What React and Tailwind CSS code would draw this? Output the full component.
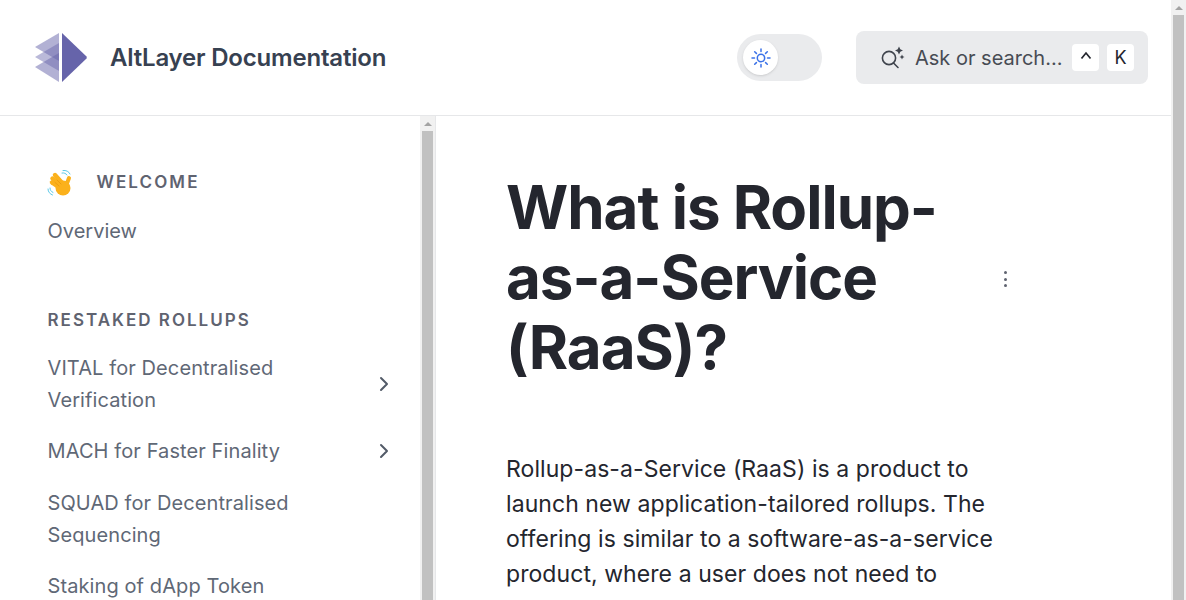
import { ChevronRight } from 'lucide-react'

const NAV = [
  { label: ['VITAL for Decentralised', 'Verification'], chevron: true },
  { label: ['MACH for Faster Finality'], chevron: true },
  { label: ['SQUAD for Decentralised', 'Sequencing'] },
  { label: ['Staking of dApp Token'] },
]

function Logo() {
  return (
    <svg width="54" height="52" viewBox="0 0 54 52" className="shrink-0">
      <path d="M25 1 L1 15 L25 29 Z" fill="#6664aa" fillOpacity="0.5" />
      <path d="M25 11 L1 25 L25 39 Z" fill="#6664aa" fillOpacity="0.45" />
      <path d="M25 21 L1 35 L25 50 Z" fill="#6664aa" fillOpacity="0.5" />
      <path d="M28 1 L52.5 24.5 Q53 25.5 52.5 26.5 L28 50 Z" fill="#6664aa" />
    </svg>
  )
}

function SunIcon() {
  return (
    <svg width="20" height="20" viewBox="0 0 20 20" fill="none" stroke="#3b72e8" strokeWidth="1.5" strokeLinecap="round">
      <circle cx="10" cy="10" r="3.7" />
      <path d="M10 1v2.5M10 16.5V19M1 10h2.5M16.5 10H19M3.7 3.7l1.7 1.7M14.6 14.6l1.7 1.7M3.7 16.3l1.7-1.7M14.6 5.4l1.7-1.7" />
    </svg>
  )
}

function AskIcon() {
  return (
    <svg width="24" height="24" viewBox="0 0 24 24" fill="none" className="shrink-0">
      <circle cx="8" cy="12" r="6.6" stroke="#3f444d" strokeWidth="1.6" />
      <path d="M12.5 17l4.5 4.5" stroke="#3f444d" strokeWidth="1.6" strokeLinecap="round" />
      <path d="M18 0.5l1.3 2.7 2.7 1.3-2.7 1.3L18 8.5l-1.3-2.7L14 4.5l2.7-1.3z" fill="#3f444d" />
      <path d="M21 8.5l.8 1.7 1.7.8-1.7.8-.8 1.7-.8-1.7-1.7-.8 1.7-.8z" fill="#3f444d" />
    </svg>
  )
}

function CaretIcon() {
  return (
    <svg width="12" height="10" viewBox="0 0 12 10" fill="none" stroke="#24262e" strokeWidth="1.7" className="-mt-[4px]">
      <path d="M1.5 7.5 L6 2 L10.5 7.5" />
    </svg>
  )
}

function WaveEmoji() {
  return (
    <svg width="28" height="28" viewBox="0 0 28 28" fill="none" className="shrink-0 -ml-[1px]">
      <g stroke="#fbb11c" strokeWidth="4.4" strokeLinecap="round">
        <path d="M16 15 L8 6" />
        <path d="M14 17 L5.5 9.5" />
        <path d="M13 19 L5 13.5" />
        <path d="M19 17 L22 9" strokeWidth="4" />
      </g>
      <circle cx="16" cy="19" r="7.5" fill="#fbb11c" />
      <path d="M10 11l4 4M8 13.5l4 3.5" stroke="#e8930c" strokeWidth="0.7" strokeLinecap="round" />
      <path d="M15 4c2-.5 4 .5 5 2M16 1.5c3-.5 6 1 7 3.5M3 19c0 2 1 3.5 3 4.5M1 20c0 3 2 5 4.5 6" stroke="#5cc9e8" strokeWidth="1" strokeLinecap="round" />
    </svg>
  )
}

function ScrollTrack() {
  return (
    <div className="w-[15px] shrink-0 flex flex-col bg-[#f1f1f1]">
      <div className="h-[15px] flex items-center justify-center">
        <span className="w-0 h-0 border-x-[4px] border-x-transparent border-b-[4px] border-b-[#a3a3a3]" />
      </div>
      <div className="flex-1 mx-[2px] bg-[#c1c1c1]" />
    </div>
  )
}

function Kbd({ children }) {
  return (
    <span className="w-[27px] h-[27px] bg-white rounded flex items-center justify-center text-[18px] text-[#24262e]">
      {children}
    </span>
  )
}

export default function App() {
  return (
    <div className="h-[600px] w-[1186px] flex overflow-hidden bg-white text-[#24262e] font-['Inter','Liberation_Sans',sans-serif]">
      <div className="w-[1171px] flex flex-col">
        {/* Header */}
        <header className="h-[116px] shrink-0 border-b border-[#e6e7e9] flex items-center pl-[34px] pr-[23px]">
          <Logo />
          <span className="ml-[22px] text-[24px] font-semibold tracking-[-0.2px] text-[#374151]">AltLayer Documentation</span>
          <div className="ml-auto w-[85px] h-[47px] rounded-full bg-[#eaebed] flex items-center pl-[6px]">
            <span className="w-[35px] h-[35px] rounded-full bg-white shadow flex items-center justify-center">
              <SunIcon />
            </span>
          </div>
          <div className="ml-[34px] w-[292px] h-[53px] rounded-lg bg-[#eaebed] flex items-center pl-[25px] pr-[14px]">
            <AskIcon />
            <span className="ml-[10px] text-[20px] text-[#474b54]">Ask or search...</span>
            <div className="ml-auto flex gap-2">
              <Kbd><CaretIcon /></Kbd>
              <Kbd>K</Kbd>
            </div>
          </div>
        </header>

        <div className="flex-1 flex min-h-0">
          {/* Sidebar */}
          <aside className="w-[436px] shrink-0 flex border-r border-[#e6e7e9]">
            <nav className="w-[420px] overflow-hidden pl-[47.5px] pr-[24px] pt-[51px] text-[#5f6876]">
              <div className="flex items-center h-[32px]">
                <WaveEmoji />
                <span className="ml-[22px] text-[17px] font-semibold tracking-[2.1px] text-[#5f6370]">WELCOME</span>
              </div>
              <div className="mt-[14px] text-[20px] leading-8 py-[2px]">Overview</div>

              <div className="mt-[55px] text-[17px] font-semibold tracking-[2px] text-[#5f6370] leading-8">RESTAKED ROLLUPS</div>
              <div className="mt-[16px] flex flex-col gap-[19.3px] text-[20px] leading-8 tracking-[0.1px]">
                {NAV.map(item => (
                  <div key={item.label[0]} className="flex items-center justify-between">
                    <div>
                      {item.label.map(line => <div key={line}>{line}</div>)}
                    </div>
                    {item.chevron && <ChevronRight size={24} className="text-[#535b68]" />}
                  </div>
                ))}
              </div>
            </nav>
            <ScrollTrack />
          </aside>

          {/* Content */}
          <main className="flex-1 relative pl-[70px] pr-[150px] pt-[56px] overflow-hidden">
            <h1 className="text-[60px] leading-[70px] font-bold text-[#24262e] tracking-[-1px]">What is Rollup-as-a-Service (RaaS)?</h1>
            <p className="mt-[70px] text-[23px] leading-[35px] text-[#24262e] tracking-[0.07px]">
              Rollup-as-a-Service (RaaS) is a product to launch new application-tailored rollups. The offering is similar to a software-as-a-service product, where a user does not need to
            </p>
            <div className="absolute left-[568px] top-[155px] flex flex-col gap-[3.5px]">
              <span className="w-[3px] h-[3px] rounded-full bg-[#5f6370]" />
              <span className="w-[3px] h-[3px] rounded-full bg-[#5f6370]" />
              <span className="w-[3px] h-[3px] rounded-full bg-[#5f6370]" />
            </div>
          </main>
        </div>
      </div>

      {/* Page scrollbar */}
      <ScrollTrack />
    </div>
  )
}
